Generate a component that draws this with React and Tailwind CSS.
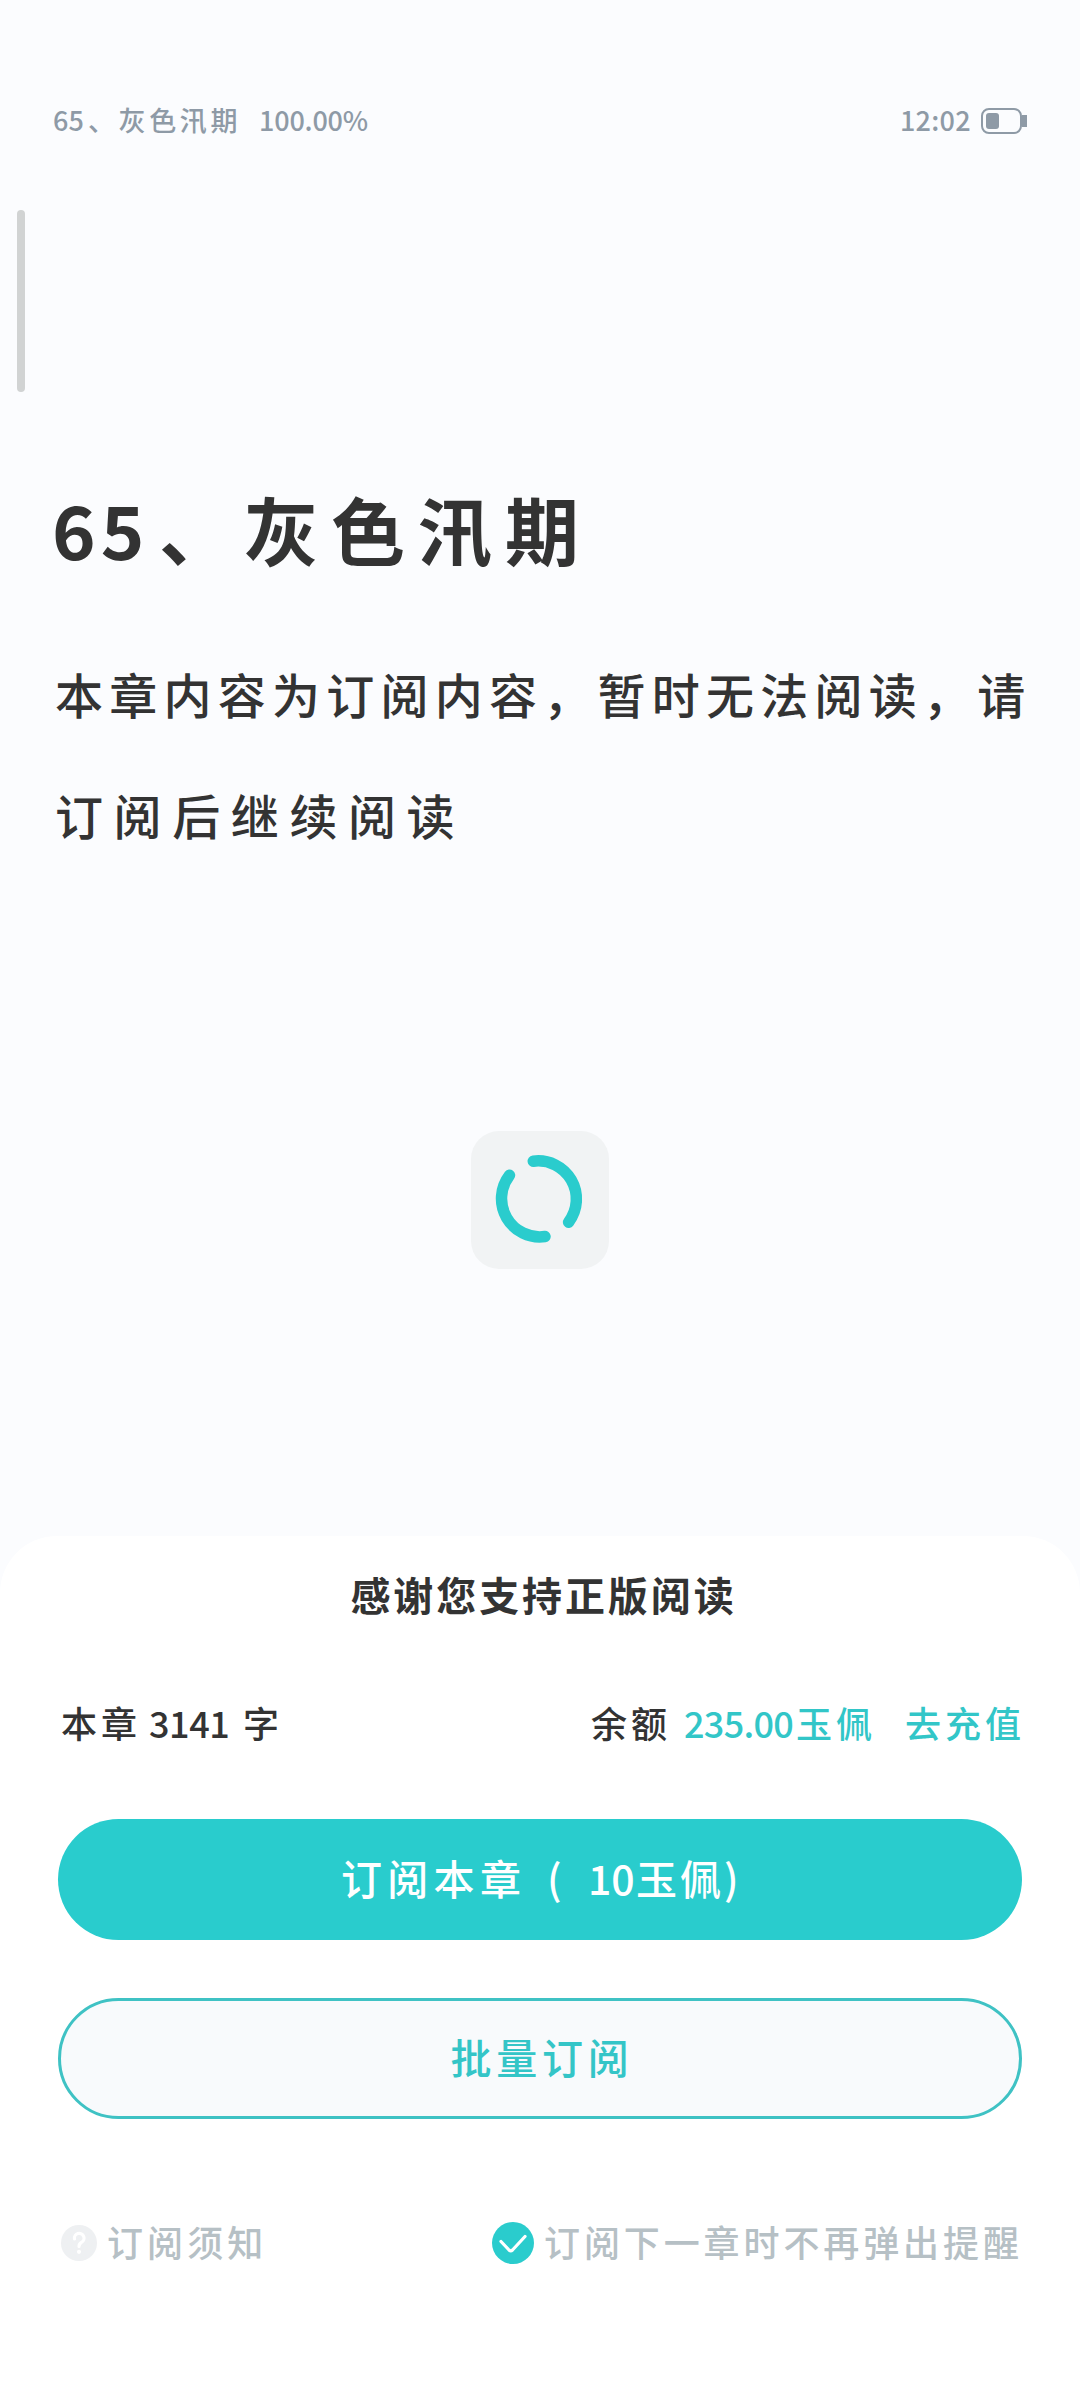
const StatusBar = () => {
  return (
    <header className="flex h-[242px] items-start justify-between pt-[100px] pr-[53px] pl-[53px] text-[27px] leading-[40px] font-medium text-[#8e9aa6]">
      <div className="flex whitespace-pre">
        <span className="w-[35px]">65</span>
        <span className="w-[171px] tracking-[3.6px]">、灰色汛期</span>
        <span className="tracking-[-0.2px]">100.00%</span>
      </div>

      <div className="flex items-center">
        <span className="mr-[10px] tracking-[0.3px]">12:02</span>
        <div className="flex items-center pt-0.5">
          <div className="flex h-[26px] w-[41px] items-center rounded-[8px] border-2 border-[#8e9aa6] pl-[3px]">
            <div className="h-4 w-[13px] rounded-[3px] bg-[#8e9aa6]" />
          </div>
          <div className="h-3 w-[5px] bg-[#8e9aa6]" />
        </div>
      </div>
    </header>
  );
};

const Chapter = () => {
  return (
    <main className="h-[889px] pt-[226px] text-[#333333]">
      <h1 className="flex pl-[52px] text-[74px] leading-[120px] font-bold whitespace-nowrap">
        <span className="w-[107px] tracking-[5px]">65</span>
        <span className="w-[85px]">、</span>
        <span className="tracking-[13px]">灰色汛期</span>
      </h1>

      <div className="mt-[45px] pl-[55px] text-[48px] leading-[121px] font-medium whitespace-nowrap">
        <p className="tracking-[6.25px]">本章内容为订阅内容，暂时无法阅读，请</p>
        <p className="tracking-[10.6px]">订阅后继续阅读</p>
      </div>
    </main>
  );
};

const Spinner = () => {
  return (
    <div className="mx-auto h-[138px] w-[138px] rounded-[28px] bg-[#f1f3f4]">
      <svg
        viewBox="0 0 138 138"
        className="h-full w-full"
        fill="none"
        stroke="#2acccd"
        strokeWidth="11.5"
        strokeLinecap="round"
      >
        <path d="M62.3 30.2A38.2 38.2 0 0 1 97.6 91.2" />
        <path d="M74 105.5A38.2 38.2 0 0 1 38.5 44.3" />
      </svg>
    </div>
  );
};

const SubscribeSheet = () => {
  return (
    <section className="mt-[267px] h-[864px] rounded-t-[57px] bg-white px-[58px] pt-[28px]">
      <h2 className="pl-[7px] text-center text-[40px] leading-[60px] font-bold tracking-[2.9px] text-[#333333]">
        感谢您支持正版阅读
      </h2>

      <div className="mt-[68px] flex justify-between text-[36px] leading-[60px] font-medium whitespace-nowrap text-[#333333]">
        <div className="flex pl-[3px]">
          <span className="w-[88px] tracking-[4px]">本章</span>
          <span className="w-[94px] tracking-[-0.4px]">3141</span>
          <span>字</span>
        </div>
        <div className="flex text-[#32c6c8]">
          <span className="w-[93px] tracking-[4px] text-[#333333]">余额</span>
          <span className="w-[112px] tracking-[-0.7px]">235.00</span>
          <span className="w-[109px] tracking-[4px]">玉佩</span>
          <span className="w-[117px] tracking-[4px]">去充值</span>
        </div>
      </div>

      <button className="mt-[67px] flex h-[121px] w-full items-center rounded-full bg-[#29cccd] pb-[3px] pl-[284px] text-left text-[41px] font-medium whitespace-nowrap text-white">
        <span className="-ml-[1px] w-[206px] tracking-[5.3px]">订阅本章</span>
        <span className="w-[41px]">(</span>
        <span className="w-[48px]">10</span>
        <span className="w-[88px] tracking-[3px]">玉佩</span>
        <span>)</span>
      </button>

      <button className="mt-[58px] flex h-[121px] w-full items-center justify-center rounded-full border-[3px] border-[#3fc2c4] bg-[#f8fafc] pb-[3px] pl-1 text-[41px] font-medium tracking-[4.8px] text-[#34c5c7]">
        批量订阅
      </button>

      <div className="mt-[95px] flex items-center justify-between text-[36px] leading-[60px] whitespace-nowrap text-[#b6c0c5]">
        <div className="flex items-center pl-[3px]">
          <svg viewBox="0 0 36 36" className="mr-[10px] h-9 w-9" fill="none">
            <circle cx="18" cy="18" r="18" fill="#eef0f2" />
            <path
              d="M13.5 14A4.8 4.8 0 1 1 20.5 17.4C18.8 18.4 18 19.2 18 21.5"
              stroke="white"
              strokeWidth="3.2"
              strokeLinecap="round"
            />
            <circle cx="18" cy="26.8" r="2.1" fill="white" />
          </svg>
          <span className="-mt-[3px] font-medium tracking-[4.1px]">订阅须知</span>
        </div>

        <div className="flex items-center">
          <svg viewBox="0 0 42 42" className="mr-[10px] h-[42px] w-[42px]" fill="none">
            <circle cx="21" cy="21" r="21" fill="#2acccd" />
            <path
              d="M9 19.5L17 28C18 29 19.5 29 20.5 28L33 14.5"
              stroke="white"
              strokeWidth="3.2"
              strokeLinecap="round"
              strokeLinejoin="round"
            />
          </svg>
          <span className="-mt-[3px] w-[478px] font-medium tracking-[3.9px]">订阅下一章时不再弹出提醒</span>
        </div>
      </div>
    </section>
  );
};

const App = () => {
  return (
    <div className="relative h-[2400px] w-[1080px] overflow-hidden bg-[#fbfcfe] font-['Noto_Sans_CJK_SC',sans-serif]">
      {/* reading progress, floats over the page */}
      <div className="absolute top-[210px] left-[17px] h-[182px] w-2 rounded-full bg-[#d1d3d3]" />
      <StatusBar />
      <Chapter />
      <Spinner />
      <SubscribeSheet />
    </div>
  );
};

export default App;
